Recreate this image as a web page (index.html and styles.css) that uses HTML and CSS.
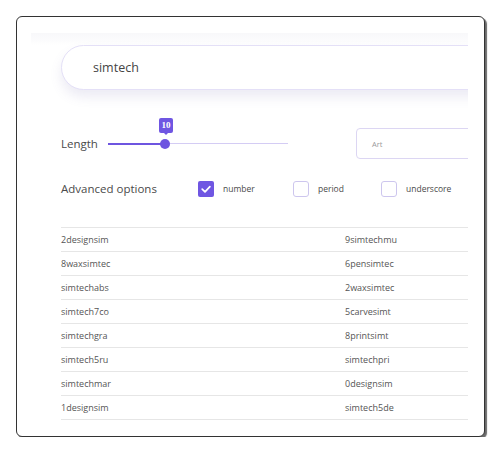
FILE: index.html
```html
<!DOCTYPE html>
<html>
<head>
<meta charset="utf-8">
<link rel="stylesheet" href="styles.css">
</head>
<body>
<div class="card">
  <div class="viewport">
    <div class="content">
      <div class="search"><span class="search-text">simtech</span></div>

      <div class="length-row">
        <span class="label">Length</span>
        <div class="slider">
          <div class="track-fill"></div>
          <div class="thumb"></div>
          <div class="tip">10</div>
        </div>
        <div class="art-input"><span class="placeholder">Art</span></div>
      </div>

      <div class="adv-row">
        <span class="label">Advanced options</span>
        <div class="opt"><span class="box checked"><svg viewBox="0 0 16 16" width="16" height="16"><path d="M4.2 8.2 L7 10.9 L11.9 5.6" fill="none" stroke="#fff" stroke-width="1.7" stroke-linecap="round" stroke-linejoin="round"/></svg></span><span class="opt-label">number</span></div>
        <div class="opt"><span class="box"></span><span class="opt-label">period</span></div>
        <div class="opt"><span class="box"></span><span class="opt-label">underscore</span></div>
      </div>

      <div class="table">
        <div class="row"><span>2designsim</span><span>9simtechmu</span></div>
        <div class="row"><span>8waxsimtec</span><span>6pensimtec</span></div>
        <div class="row"><span>simtechabs</span><span>2waxsimtec</span></div>
        <div class="row"><span>simtech7co</span><span>5carvesimt</span></div>
        <div class="row"><span>simtechgra</span><span>8printsimt</span></div>
        <div class="row"><span>simtech5ru</span><span>simtechpri</span></div>
        <div class="row"><span>simtechmar</span><span>0designsim</span></div>
        <div class="row"><span>1designsim</span><span>simtech5de</span></div>
      </div>
    </div>
  </div>
</div>
</body>
</html>
```

FILE: styles.css
```css
html, body {
  margin: 0;
  padding: 0;
  background: #ffffff;
}
body {
  font-family: "Open Sans", "Noto Sans", sans-serif;
  color: #4a4a4a;
  padding: 16px 0 0 16px;
}
.card {
  width: 467px;
  height: 403px;
  border: 1px solid #333333;
  border-radius: 6px;
  box-shadow: 2px 2px 1px #6a6a6a;
  background: #ffffff;
  padding-top: 16px;
  box-sizing: content-box;
}
.viewport {
  margin-left: 14px;
  width: 437px;
  height: 403px;
  overflow: hidden;
  background: linear-gradient(#f8f8fa 0px, #fcfcfd 8px, #ffffff 12px);
}
.content {
  width: 800px;
  padding: 12px 0 0 30px;
}
.search {
  height: 43px;
  border: 1px solid #e4e0f7;
  border-radius: 23px;
  background: #ffffff;
  box-shadow: 0 7px 12px rgba(110, 100, 170, 0.13);
  display: flex;
  align-items: center;
  padding-left: 31px;
}
.search-text {
  font-size: 12.5px;
  color: #444444;
}
.length-row {
  margin-top: 38px;
  height: 31px;
  display: flex;
  align-items: center;
}
.length-row > * {
  flex-shrink: 0;
}
.label {
  font-size: 11.5px;
  color: #4a4a4a;
}
.length-row .label {
  width: 47px;
}
.slider {
  position: relative;
  width: 180px;
  height: 1px;
  background: #d4ccf4;
  margin-right: 68px;
}
.track-fill {
  width: 57px;
  height: 2px;
  margin-top: -0.5px;
  background: #6e55e0;
}
.thumb {
  position: absolute;
  left: 52px;
  top: -4.5px;
  width: 10px;
  height: 10px;
  border-radius: 50%;
  background: #6e55e0;
}
.tip {
  position: absolute;
  left: 51px;
  top: -25px;
  width: 14px;
  height: 15px;
  border-radius: 2px;
  background: #6f56e2;
  color: #ffffff;
  font-family: "Liberation Serif", "DejaVu Serif", serif;
  font-weight: bold;
  font-size: 9px;
  line-height: 15px;
  text-align: center;
}
.tip::after {
  content: "";
  position: absolute;
  left: 5px;
  bottom: -2px;
  border-left: 2px solid transparent;
  border-right: 2px solid transparent;
  border-top: 2px solid #6f56e2;
}
.art-input {
  width: 300px;
  height: 29px;
  border: 1px solid #dcd6f3;
  border-radius: 4px;
  display: flex;
  align-items: center;
  padding-left: 15px;
}
.placeholder {
  font-size: 7.5px;
  color: #9a9a9a;
}
.adv-row {
  margin-top: 21px;
  height: 17px;
  display: grid;
  grid-template-columns: 137px 95px 88px auto;
  align-items: center;
}
.opt {
  display: flex;
  align-items: center;
}
.box {
  width: 14px;
  height: 14px;
  border: 1px solid #cdc6ee;
  border-radius: 3px;
  margin-right: 9px;
  display: flex;
  align-items: center;
  justify-content: center;
}
.box.checked {
  width: 16px;
  height: 16px;
  border: none;
  border-radius: 2px;
  background: #6f56e2;
}
.opt-label {
  font-size: 8.5px;
  color: #4a4a4a;
}
.table {
  margin-top: 30px;
  width: 568px;
  border-top: 1px solid #e6e6e6;
}
.row {
  display: grid;
  grid-template-columns: 284px 284px;
  height: 23px;
  border-bottom: 1px solid #e6e6e6;
  align-items: center;
  font-size: 9px;
  color: #555555;
}
```
